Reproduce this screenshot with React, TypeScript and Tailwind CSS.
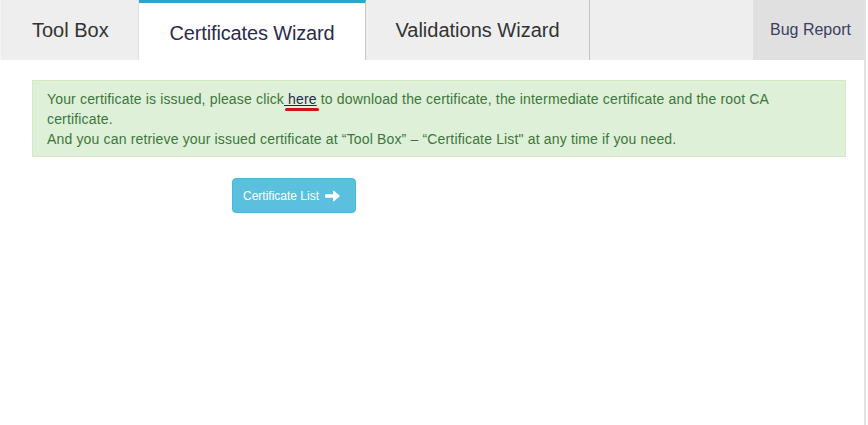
export default function App() {
  return (
    <div className="w-[868px] h-[425px] bg-white [font-family:'Liberation_Sans',Arial,sans-serif] overflow-hidden">
      <div className="w-[866px] h-full border-r-2 border-[#e2e2e2]">
        <nav className="flex h-[60px] bg-[#eeeeee] border-l border-[#f6f6f6] whitespace-nowrap">
          <a className="flex items-center w-[138px] pl-[31px] text-[20px] text-[#333] border-r border-[#e0e0e0]">Tool Box</a>
          <a className="flex items-center pt-[3px] w-[227px] justify-center text-[20px] tracking-[-0.15px] text-[#2b2c4c] bg-white border-t-[3px] border-[#2ea3d0] border-r border-r-[#c8c8c8]">
            Certificates Wizard
          </a>
          <a className="flex items-center justify-center w-[224px] text-[20px] text-[#333] border-r border-[#c4c4c4]">Validations Wizard</a>
          <div className="flex-1" />
          <a className="flex items-center pl-[17px] w-[111px] text-[16px] text-[#394062] bg-[#e0e0e0]">Bug Report</a>
        </nav>
        <div className="px-[32px] pt-[20px]">
          <div className="bg-[#dff0d8] border border-[#d6e9c6] pt-[8px] pb-[7px] px-[14px] text-[14px] leading-[20px] tracking-[0.16px] text-[#3c763d] w-[814px]">
            <p className="pr-[40px]">
              Your certificate is issued, please click
              <span className="relative">
                <a className="text-[#1f2a4f] underline"> here</a>
                <span className="absolute left-[1px] top-[17px] w-[34px] h-[3px] rounded-full bg-[#d0101a]" />
              </span>{' '}
              to download the certificate, the intermediate certificate and the root CA certificate.
            </p>
            <p>And you can retrieve your issued certificate at “Tool Box” – “Certificate List" at any time if you need.</p>
          </div>
          <div className="pl-[200px] pt-[21px]">
            <button className="flex items-center gap-[6px] h-[35px] pl-[10px] pr-[15px] rounded-[4px] bg-[#5bc0de] border border-[#46b8da] text-white text-[12px]">
              Certificate List
              <svg width="15" height="12" viewBox="0 0 15 12" fill="white">
                <path d="M1 4.2h7V1.2c0-.5.5-.7.9-.4l5.6 4.7c.3.3.3.7 0 1l-5.6 4.7c-.4.3-.9.1-.9-.4V7.8H1c-.5 0-.9-.4-.9-.9V5.1c0-.5.4-.9.9-.9z" />
              </svg>
            </button>
          </div>
        </div>
      </div>
    </div>
  )
}
